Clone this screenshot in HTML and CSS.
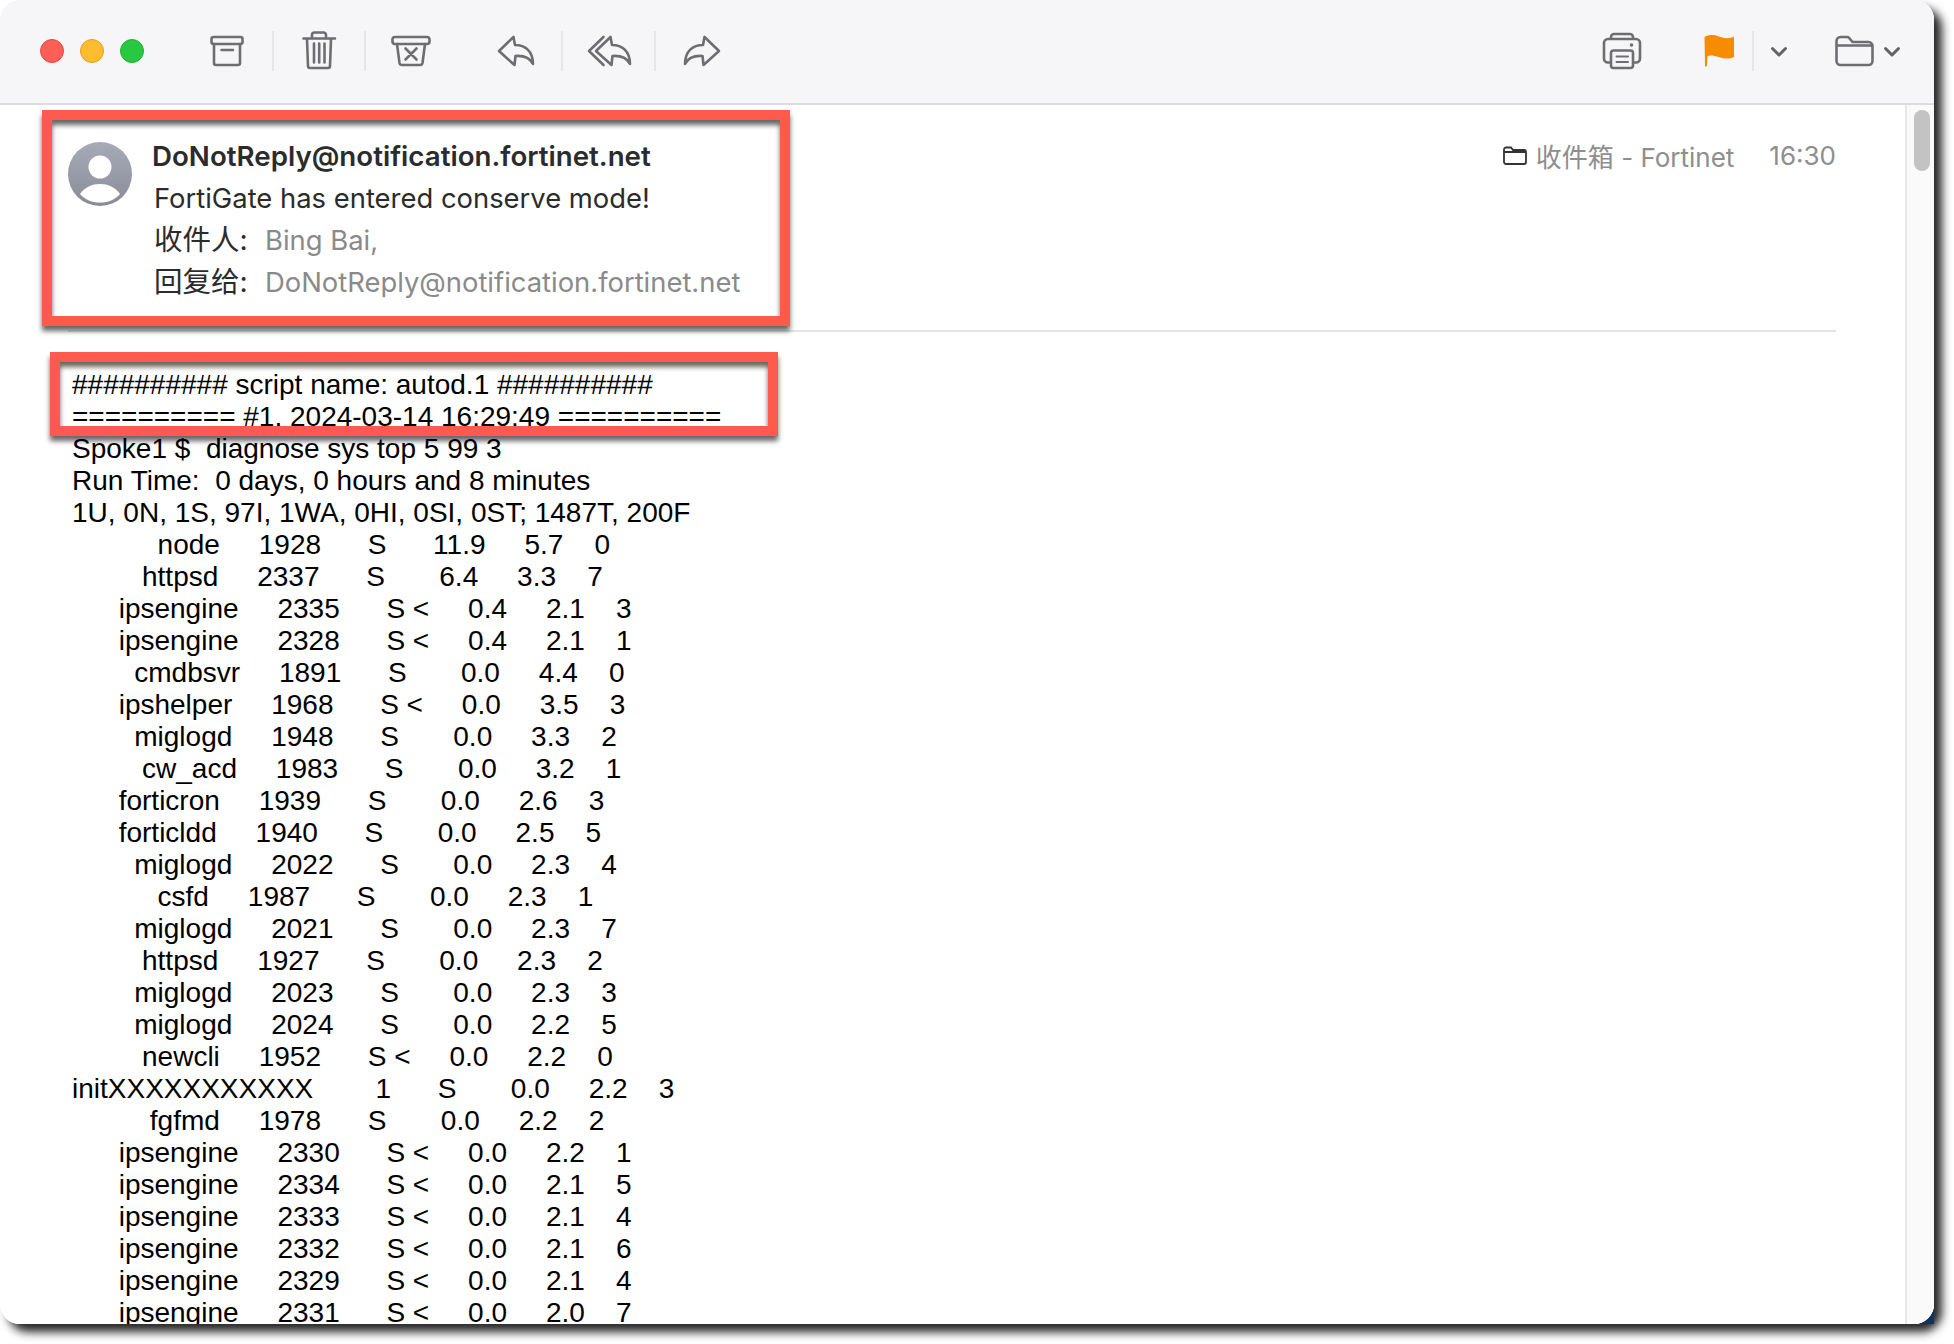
FILE: index.html
```html
<!DOCTYPE html>
<html lang="zh">
<head>
<meta charset="utf-8">
<title>FortiGate has entered conserve mode!</title>
<link rel="stylesheet" href="styles.css">
</head>
<body>
<div class="window">
  <header class="toolbar">
    <div class="lights"><span class="light red"></span><span class="light yellow"></span><span class="light green"></span></div>
    <div class="group group-trash">
      <svg class="ico" viewBox="0 0 48 48"><rect x="8.500" y="10" width="31" height="7" rx="2"/><path d="M11 17V36a2 2 0 0 0 2 2H35a2 2 0 0 0 2-2V17M18.500 23H30"/></svg>
      <i class="sep"></i>
      <svg class="ico" viewBox="0 0 48 48"><path d="M8.500 11.500H40M17 11V8a2.500 2.500 0 0 1 2.500-2.500h9A2.500 2.500 0 0 1 31 8v3M12 12l1 27a2 2 0 0 0 2 2H33a2 2 0 0 0 2-2l1-27M19 16.500v19M24.200 16.500v19M29.500 16.500v19"/></svg>
      <i class="sep"></i>
      <svg class="ico" viewBox="0 0 48 48"><rect x="5.500" y="10" width="37" height="7" rx="2.500"/><path d="M10 17l2.500 19a2.500 2.500 0 0 0 2.500 2H33a2.500 2.500 0 0 0 2.500-2L38 17M18.500 21.500l11 11M29.500 21.500l-11 11"/></svg>
    </div>
    <div class="group group-reply">
      <svg class="ico" viewBox="0 0 48 48"><path d="M7 24L21.500 10L23 18C33 18 41 24 41 37C38 31 31 28.500 23.500 29L22.500 38Z"/></svg>
      <i class="sep"></i>
      <svg class="ico" viewBox="0 0 48 48"><path d="M18.500 10L4 24L18.500 38"/><path d="M11 24L25.500 10L27 18C37 18 45 24 45 37C42 31 35 28.500 27.500 29L26.500 38Z"/></svg>
      <i class="sep"></i>
      <svg class="ico" viewBox="0 0 48 48"><path d="M41 24L26.500 10L25 18C15 18 7 24 7 37C10 31 17 28.500 24.500 29L25.500 38Z"/></svg>
    </div>
    <div class="group group-right">
      <svg class="ico printer" viewBox="0 0 48 48"><path d="M12.500 35.500H10a4 4 0 0 1-4-4V16a4 4 0 0 1 4-4H38a4 4 0 0 1 4 4V31.500a4 4 0 0 1-4 4H35.500M13 12V10a3 3 0 0 1 3-3H32a3 3 0 0 1 3 3V12"/><rect x="13" y="23.500" width="22" height="17.500" rx="2.500"/><path class="thin" d="M18.500 29.500H30M18.500 35H30"/><circle class="dot" cx="33.500" cy="18" r="1.800"/></svg>
      <svg class="ico flag" viewBox="0 0 48 48"><path class="flag-shape" d="M9.500 10C14 7.500 19 7.500 24 9.500C30 12 35 11.500 39 9.500V30C35 32 30 32 24 30C19 28.500 15 28 12.500 29L12 38.500Q11 40.500 10 39Z"/></svg>
      <i class="sep sep-flag"></i>
      <svg class="chev" viewBox="0 0 24 48"><path d="M5.500 21.500L12 28L18.500 21.500"/></svg>
      <svg class="ico folder" viewBox="0 0 48 48"><path d="M6.500 14a4 4 0 0 1 4-4H17a3 3 0 0 1 2.200 1l3.300 4H38.500a4 4 0 0 1 4 4V34a4 4 0 0 1-4 4H10.500a4 4 0 0 1-4-4ZM7 18.500H42"/></svg>
      <svg class="chev chev-last" viewBox="0 0 24 48"><path d="M5.500 21.500L12 28L18.500 21.500"/></svg>
    </div>
  </header>

  <div class="content">
    <main class="mail">
      <section class="mail-head">
        <svg class="avatar" viewBox="0 0 64 64">
          <defs><linearGradient id="ag" x1="0" y1="0" x2="0" y2="1"><stop offset="0" stop-color="#a6abb8"/><stop offset="1" stop-color="#898c97"/></linearGradient></defs>
          <circle cx="32" cy="32" r="32" fill="url(#ag)"/>
          <circle cx="32" cy="25" r="11.500" fill="#fff"/>
          <path d="M12 52C17 45 24 42 32 42C40 42 47 45 52 52C47 58 40 60.500 32 60.500C24 60.500 17 58 12 52Z" fill="#fff"/>
        </svg>
        <div class="head-rows">
          <div class="sender">DoNotReply@notification.fortinet.net</div>
          <div class="row">FortiGate has entered conserve mode!</div>
          <div class="row"><span class="label">收件人:</span><span class="value">Bing Bai,</span></div>
          <div class="row"><span class="label">回复给:</span><span class="value">DoNotReply@notification.fortinet.net</span></div>
        </div>
        <div class="meta">
          <svg class="meta-folder" viewBox="0 0 24 19"><path d="M1 3.500a2 2 0 0 1 2-2H8l2 2.500H21a2 2 0 0 1 2 2V16a2 2 0 0 1-2 2H3a2 2 0 0 1-2-2ZM1 6H23"/></svg>
          <span class="mailbox">收件箱 - Fortinet</span>
          <span class="time">16:30</span>
        </div>
      </section>
      <hr class="divider">
<pre class="log">########## script name: autod.1 ##########
========== #1, 2024-03-14 16:29:49 ==========
Spoke1 $  diagnose sys top 5 99 3
Run Time:  0 days, 0 hours and 8 minutes
1U, 0N, 1S, 97I, 1WA, 0HI, 0SI, 0ST; 1487T, 200F
           node     1928      S      11.9     5.7    0
         httpsd     2337      S       6.4     3.3    7
      ipsengine     2335      S &lt;     0.4     2.1    3
      ipsengine     2328      S &lt;     0.4     2.1    1
        cmdbsvr     1891      S       0.0     4.4    0
      ipshelper     1968      S &lt;     0.0     3.5    3
        miglogd     1948      S       0.0     3.3    2
         cw_acd     1983      S       0.0     3.2    1
      forticron     1939      S       0.0     2.6    3
      forticldd     1940      S       0.0     2.5    5
        miglogd     2022      S       0.0     2.3    4
           csfd     1987      S       0.0     2.3    1
        miglogd     2021      S       0.0     2.3    7
         httpsd     1927      S       0.0     2.3    2
        miglogd     2023      S       0.0     2.3    3
        miglogd     2024      S       0.0     2.2    5
         newcli     1952      S &lt;     0.0     2.2    0
initXXXXXXXXXXX        1      S       0.0     2.2    3
          fgfmd     1978      S       0.0     2.2    2
      ipsengine     2330      S &lt;     0.0     2.2    1
      ipsengine     2334      S &lt;     0.0     2.1    5
      ipsengine     2333      S &lt;     0.0     2.1    4
      ipsengine     2332      S &lt;     0.0     2.1    6
      ipsengine     2329      S &lt;     0.0     2.1    4
      ipsengine     2331      S &lt;     0.0     2.0    7</pre>
    </main>
    <aside class="scrollbar"><div class="thumb"></div></aside>
  </div>

  <div class="callout callout-head"></div>
  <div class="callout callout-log"></div>
</div>
</body>
</html>
```

FILE: styles.css
```css
* { box-sizing: border-box; }
html, body { margin: 0; height: 100%; background: #fff; overflow: hidden; }
body { font-family: "Inter", "Noto Sans CJK SC", sans-serif; }

.window {
  position: relative;
  z-index: 1;
  width: 1934px;
  height: 1324px;
  display: flex;
  flex-direction: column;
  background: #fff;
  border-radius: 20px;
  overflow: hidden;
}
body::before {
  content: "";
  position: absolute;
  left: 0; top: 0;
  width: 1934px; height: 1324px;
  border-radius: 20px;
  box-shadow: 8px 8px 10px rgba(0,0,0,.85);
}
body::after {
  content: "";
  position: absolute;
  left: 1922px; top: 1312px;
  width: 12px; height: 12px;
  background: #16305c;
}

.toolbar {
  flex: none;
  height: 105px;
  display: flex;
  align-items: center;
  padding: 0 30px 1px 40px;
  background: #f6f6f8;
  border-bottom: 2px solid #dcdcde;
}
.lights { display: flex; gap: 16px; }
.light { width: 24px; height: 24px; border-radius: 50%; }
.red { background: #ff5f57; border: 1px solid #e5483f; }
.yellow { background: #febc2e; border: 1px solid #e0a020; }
.green { background: #28c840; border: 1px solid #1fb032; }

.group { display: flex; align-items: center; }
.group-trash { gap: 21px; margin-left: 59px; }
.group-reply { gap: 21.500px; margin-left: 56.500px; }
.group-right { margin-left: auto; }

.ico { width: 48px; height: 48px; flex: none; fill: none; stroke: #6e6e72; stroke-width: 2.600; stroke-linecap: round; stroke-linejoin: round; }
.sep { display: block; width: 2px; height: 40px; background: #e6e6e8; flex: none; }
.printer rect { fill: #f6f6f8; }
.thin { stroke-width: 2; }
.dot { fill: #6e6e72; stroke: none; }
.flag { margin-left: 49px; }
.flag-shape { fill: #f78c00; stroke: none; }
.sep-flag { margin-left: 9.500px; margin-right: 13px; }
.chev { width: 24px; height: 48px; flex: none; fill: none; stroke: #636366; stroke-width: 3; stroke-linecap: round; stroke-linejoin: round; }
.folder { margin-left: 38.500px; }
.chev-last { margin-left: 2.500px; }

.content { flex: 1; min-height: 0; display: flex; }
.mail { flex: 1; min-width: 0; overflow: hidden; padding: 30px 69px 0 68px; }

.mail-head { display: flex; align-items: flex-start; }
.avatar { flex: none; width: 64px; height: 64px; margin: 7px 20px 0 0; }
.head-rows { font-size: 27.400px; line-height: 42px; color: #2b2b2b; }
.sender { font-weight: 600; font-size: 27.700px; }
.row { margin-left: 2px; display: flex; }
.label { width: 111px; flex: none; font-size: 28.500px; }
.value { color: #8a8a8a; }
.meta { margin-left: auto; display: flex; align-items: center; height: 41px; color: #8e8e8e; font-size: 26px; }
.meta-folder { width: 24px; height: 19px; fill: none; stroke: #333; stroke-width: 1.800; margin-right: 9px; }
.time { margin-left: 35px; }

.divider { height: 2px; border: 0; margin: 27px 0 37px; background: #e5e5e5; }

.log {
  margin: 0 0 0 4px;
  font-family: "Liberation Sans", Arial, sans-serif;
  font-size: 28px;
  line-height: 32px;
  color: #000;
}

.scrollbar { flex: none; width: 29px; padding: 5px 6px 0 7px; background: #fafafa; border-left: 2px solid #e8e8e8; }
.thumb { width: 16px; height: 61px; border-radius: 8px; background: #c3c3c3; }

.callout { position: absolute; border: 10px solid #ff5a4d; box-shadow: 0 5px 5px rgba(0,0,0,.6), inset 0 5px 5px rgba(0,0,0,.6); }
.callout-head { left: 42px; top: 110px; width: 748px; height: 216px; }
.callout-log { left: 50px; top: 352px; width: 728px; height: 84px; }
```
